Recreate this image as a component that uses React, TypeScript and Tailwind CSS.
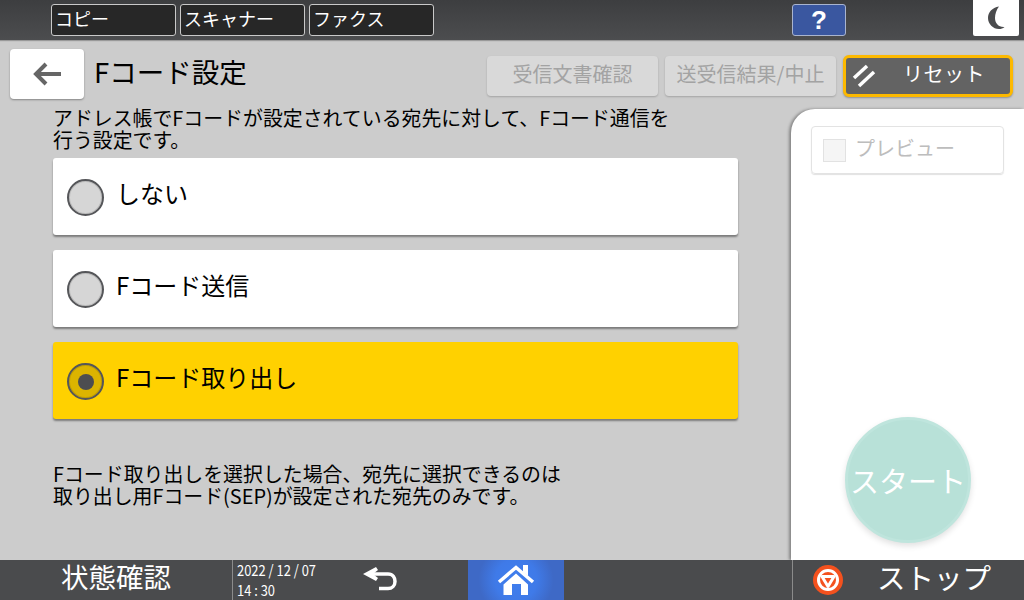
const jp = { fontFamily: '"Noto Sans CJK JP", "Noto Sans", sans-serif' };

function Radio({ checked }: { checked?: boolean }) {
  return (
    <span
      className={`mt-[2px] flex h-[37px] w-[37px] shrink-0 items-center justify-center rounded-full border-[2px] border-[#555659] shadow-[inset_0_0_0_1px_rgba(0,0,0,0.12)] ${
        checked ? "bg-[#dcb400]" : "bg-[#d6d6d6]"
      }`}
    >
      {checked && <span className="h-4 w-4 rounded-full bg-[#4c4d50]" />}
    </span>
  );
}

function Option({ label, checked }: { label: string; checked?: boolean }) {
  return (
    <div
      className={`flex h-[77px] items-center gap-[12px] rounded-[3px] pl-[14px] shadow-[0_2px_2px_rgba(0,0,0,0.4)] ${
        checked ? "bg-[#ffd100]" : "bg-white"
      }`}
    >
      <Radio checked={checked} />
      <span className="pb-[7px] text-[24px] leading-none text-black">{label}</span>
    </div>
  );
}

function TabButton({ label }: { label: string }) {
  return (
    <div className="flex h-[32px] w-[125px] items-center rounded-[3px] border border-[#c9c9c9] bg-[#272727] pb-[4px] pl-[3px] text-[18px] leading-none text-white">
      {label}
    </div>
  );
}

function DisabledButton({ label }: { label: string }) {
  return (
    <div className="flex h-[40px] w-[171px] items-center justify-center rounded-[4px] bg-[#d9d9d9] pb-[5px] text-[20px] leading-none text-[#a3a3a3] shadow-[0_1px_2px_rgba(0,0,0,0.2)]">
      {label}
    </div>
  );
}

export default function App() {
  return (
    <div className="flex h-[600px] w-[1024px] flex-col overflow-hidden bg-[#cccccc]" style={jp}>
      {/* top bar */}
      <header className="flex h-[40px] shrink-0 items-start bg-gradient-to-b from-[#3d3e40] to-[#4c4d4f] pt-[4px] shadow-[0_1px_1px_rgba(0,0,0,0.25)]">
        <div className="ml-[51px] flex gap-[4px]">
          <TabButton label="コピー" />
          <TabButton label="スキャナー" />
          <TabButton label="ファクス" />
        </div>
        <div className="ml-[358px] flex h-[32px] w-[54px] items-center justify-center rounded-[3px] border border-[#a9b4cf] bg-[#3a57a0] text-[26px] font-bold leading-none text-white" style={{ fontFamily: '"Liberation Sans", sans-serif' }}>
          ?
        </div>
        <div className="-mt-[4px] ml-[127px] flex h-[36px] w-[46px] items-center justify-center rounded-b-[2px] bg-white">
          <svg width="18" height="24" viewBox="0 0 18 24">
            <path d="M12 0.5C5 1.5 1 6.5 1 12c0 6 5 11 11 11 2 0 4-.5 5.5-2-6 .5-9.5-4-9.5-9 0-4 1.500-8.500 4-11.500Z" fill="#4a4b4d" />
          </svg>
        </div>
      </header>

      {/* main */}
      <main className="flex min-h-0 flex-1 flex-col">
        <div className="flex h-[69px] shrink-0 items-start">
          <button className="ml-[10px] mt-[9px] flex h-[50px] w-[74px] items-center justify-center rounded-[4px] bg-white shadow-[0_1px_2px_rgba(0,0,0,0.35)]">
            <svg width="30" height="26" viewBox="0 0 30 26" fill="none" stroke="#666666" strokeWidth="4">
              <path d="M29 13H4" />
              <path d="M14 3 4 13l10 10" />
            </svg>
          </button>
          <h1 className="ml-[10px] mt-[11px] text-[27.500px] font-normal leading-[40px] text-black">Fコード設定</h1>
          <div className="ml-auto mr-[11px] mt-[15px] flex items-center gap-[7px]">
            <DisabledButton label="受信文書確認" />
            <DisabledButton label="送受信結果/中止" />
            <div className="flex h-[42px] w-[170px] items-center rounded-[6px] border-[3px] border-[#fdb900] bg-[#636363] pl-[6px] text-[20px] leading-none text-white shadow-[0_1px_2px_rgba(0,0,0,0.3)]">
              <svg width="24" height="24" viewBox="0 0 24 24" stroke="#ffffff" strokeWidth="3.500" fill="none">
                <path d="M2 14 15 2" />
                <path d="M7 22 22 8" />
              </svg>
              <span className="ml-[27px] pb-[5px] tracking-[0.5px]">リセット</span>
            </div>
          </div>
        </div>

        <div className="flex min-h-0 flex-1">
          <section className="ml-[53px] w-[685px] shrink-0">
            <p className="-mt-[2px] h-[51px] text-[19.900px] leading-[22px] text-black">
              アドレス帳でFコードが設定されている宛先に対して、Fコード通信を
              <br />
              行う設定です。
            </p>
            <div className="flex flex-col gap-[15px]">
              <Option label="しない" />
              <Option label="Fコード送信" />
              <Option label="Fコード取り出し" checked />
            </div>
            <p className="mt-[44px] text-[19.900px] leading-[22px] text-black">
              Fコード取り出しを選択した場合、宛先に選択できるのは
              <br />
              取り出し用Fコード(SEP)が設定された宛先のみです。
            </p>
          </section>

          <aside className="ml-[53px] flex flex-1 flex-col rounded-tl-[24px] bg-white pl-[20px] pt-[17px] shadow-[-2px_0_3px_rgba(0,0,0,0.35)]">
            <div className="flex h-[48px] w-[193px] items-center rounded-[4px] border border-[#e3e3e3] pl-[11px] shadow-[0_1px_1px_rgba(0,0,0,0.12)]">
              <span className="h-[23px] w-[23px] border border-[#e2e2e2] bg-[#f5f5f5]" />
              <span className="mb-[4px] ml-[9px] text-[20px] leading-none text-[#bdbdbd]">プレビュー</span>
            </div>
            <div className="ml-[34px] mt-[243px] flex h-[126px] w-[126px] items-center justify-center rounded-full border-[3px] border-[#bfe5dd] bg-[#b8e1d8] text-[29px] leading-none text-white shadow-[0_3px_6px_rgba(0,0,0,0.12)]">
              <span className="whitespace-nowrap">スタート</span>
            </div>
          </aside>
        </div>
      </main>

      {/* bottom bar */}
      <footer className="flex h-[40px] shrink-0 items-center bg-[#4a4b4d] text-white">
        <div className="flex h-full w-[232px] items-center justify-center pb-[6px] text-[27.500px] leading-none">状態確認</div>
        <div className="flex h-full w-[110px] flex-col justify-center border-l border-[#8b8b8b] pb-[1px] pl-[4px] text-[15px] leading-[20px]">
          <span className="origin-left scale-x-[0.86] whitespace-nowrap">2022 / 12 / 07</span>
          <span className="origin-left scale-x-[0.86] whitespace-nowrap">14 : 30</span>
        </div>
        <div className="flex h-full w-[126px] items-center pl-[20px]">
          <svg width="36" height="28" viewBox="0 0 36 28" fill="none" stroke="#ffffff" strokeWidth="3.500">
            <path d="M1 8 14 1l2 3-5 4 5 4-2 3Z" fill="#ffffff" stroke="none" />
            <path d="M8 8h18c5 0 7 3.500 7 7.500S30 22.500 26 22.500H17" />
          </svg>
        </div>
        <div className="flex h-full w-[96px] items-center justify-center bg-[radial-gradient(circle,#3f7eee_0%,#3f7ae8_40%,#3e69c6_72%)]">
          <svg width="38" height="32" viewBox="0 0 38 32" fill="#ffffff">
            <path d="M2 18 19 3.500 36 18" fill="none" stroke="#ffffff" strokeWidth="3.500" />
            <path d="M26 1h5v11l-5-4Z" />
            <path d="M6.500 20.500 19 9.500l12 11V31H24V20H15v11H6.500Z" />
          </svg>
        </div>
        <div className="ml-[228px] flex h-full flex-1 items-center border-l border-[#8b8b8b] pl-[20px]">
          <svg width="30" height="30" viewBox="0 0 30 30" fill="none">
            <circle cx="15" cy="15" r="15" fill="#f4511e" />
            <circle cx="15" cy="15" r="9.500" stroke="#ffffff" strokeWidth="3" />
            <path d="M9 11.500h12L15 21.500Z" stroke="#ffffff" strokeWidth="3" strokeLinejoin="round" />
          </svg>
          <span className="ml-[34px] pb-[6px] text-[28.500px] leading-none">ストップ</span>
        </div>
      </footer>
    </div>
  );
}
